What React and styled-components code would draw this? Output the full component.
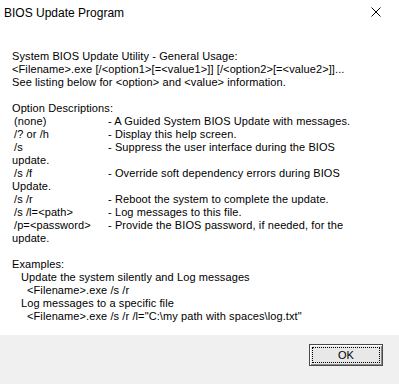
import styled, { createGlobalStyle } from "styled-components"

const Global = createGlobalStyle`
    html, body {
        margin: 0;
        padding: 0;
        background: #ffffff;
    }
`

const Window = styled.div`
    width: 399px;
    height: 384px;
    display: flex;
    flex-direction: column;
    background: #ffffff;
    overflow: hidden;
`
const TitleBar = styled.div`
    height: 30px;
    display: flex;
    align-items: flex-start;
    justify-content: space-between;
    padding-left: 4px;
`
const Title = styled.div`
    font-family: "Liberation Sans", sans-serif;
    font-size: 12px;
    line-height: 16px;
    margin-top: 5px;
    color: #000000;
`
const Close = styled.div`
    width: 46px;
    height: 24px;
    display: flex;
    align-items: center;
    justify-content: center;
`
const Body = styled.div`
    flex: 1;
    padding: 20px 0 0 12px;
    font-family: "Liberation Sans", sans-serif;
    font-size: 11px;
    line-height: 13px;
    letter-spacing: 0.1px;
    color: #000000;
    white-space: pre;
`
const Line = styled.div`
    height: 13px;
    padding-left: ${p => p.$indent || 0}px;
`
const Row = styled.div`
    display: grid;
    grid-template-columns: 94px 1fr;
    height: 13px;
    padding-left: 2px;
`
const Footer = styled.div`
    height: 40px;
    background: #f0f0f0;
    display: flex;
    justify-content: flex-end;
    align-items: flex-start;
    padding: 9px 16px 0 0;
`
const Button = styled.button`
    width: 74px;
    height: 22px;
    padding: 0;
    background: #e8e8e8;
    border: 1px solid #4a4a4a;
    box-shadow: inset 1px 1px 0 #ffffff, inset -1px -1px 0 #8a8a8a;
    display: flex;
    align-items: center;
    justify-content: center;
    font-family: "Liberation Sans", sans-serif;
    font-size: 11px;
    color: #000000;
`
const Focus = styled.span`
    display: flex;
    align-items: center;
    justify-content: center;
    width: 66px;
    height: 14px;
    border: 1px dotted #000000;
`

const options = [
    ["(none)", "- A Guided System BIOS Update with messages."],
    ["/? or /h", "- Display this help screen."],
    ["/s", "- Suppress the user interface during the BIOS", "update."],
    ["/s /f", "- Override soft dependency errors during BIOS", "Update."],
    ["/s /r", "- Reboot the system to complete the update."],
    ["/s /l=<path>", "- Log messages to this file."],
    ["/p=<password>", "- Provide the BIOS password, if needed, for the", "update."],
]

export default function App() {
    return (
        <Window>
            <Global />
            <TitleBar>
                <Title>BIOS Update Program</Title>
                <Close>
                    <svg width="10" height="10" viewBox="0 0 10 10">
                        <path d="M0.5 0.5 L9.5 9.5 M9.5 0.5 L0.5 9.5" stroke="#000" strokeWidth="1" />
                    </svg>
                </Close>
            </TitleBar>
            <Body>
                <Line>System BIOS Update Utility - General Usage:</Line>
                <Line>{"<Filename>.exe [/<option1>[=<value1>]] [/<option2>[=<value2>]]..."}</Line>
                <Line>{"See listing below for <option> and <value> information."}</Line>
                <Line />
                <Line>Option Descriptions:</Line>
                {options.map(([opt, desc, more]) => (
                    <div key={opt}>
                        <Row>
                            <span>{opt}</span>
                            <span>{desc}</span>
                        </Row>
                        {more && <Line>{more}</Line>}
                    </div>
                ))}
                <Line />
                <Line>Examples:</Line>
                <Line $indent={9}>Update the system silently and Log messages</Line>
                <Line $indent={15}>{"<Filename>.exe /s /r"}</Line>
                <Line $indent={9}>Log messages to a specific file</Line>
                <Line $indent={15}>{"<Filename>.exe /s /r /l=\"C:\\my path with spaces\\log.txt\""}</Line>
            </Body>
            <Footer>
                <Button>
                    <Focus>OK</Focus>
                </Button>
            </Footer>
        </Window>
    )
}
